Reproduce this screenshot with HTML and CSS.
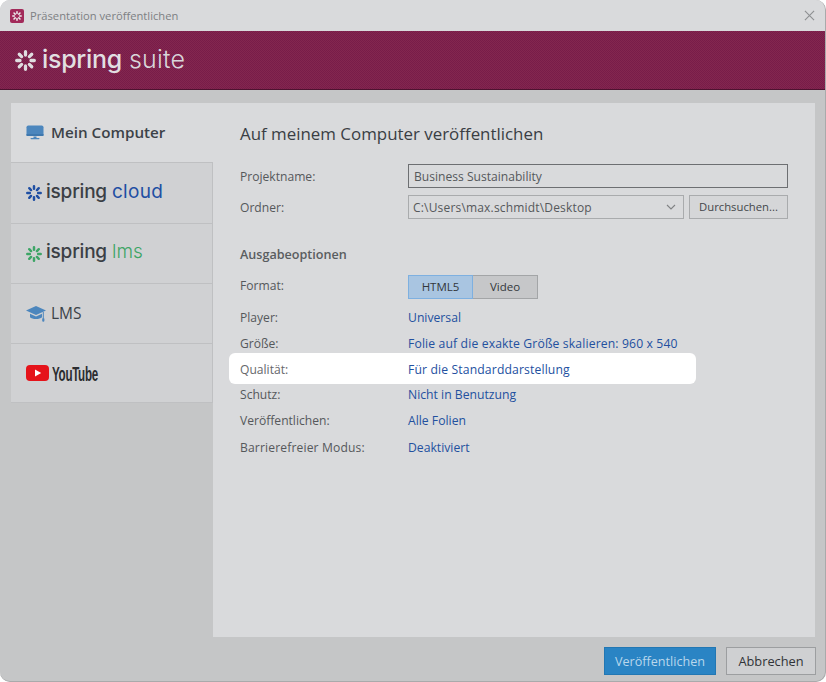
FILE: index.html
```html
<!DOCTYPE html>
<html lang="de">
<head>
<meta charset="utf-8">
<title>Präsentation veröffentlichen</title>
<link rel="stylesheet" href="styles.css">
</head>
<body>
<svg class="defs" width="0" height="0" aria-hidden="true">
  <defs>
    <g id="spark">
      <path d="M10 1.6V4.8M10 15.2V18.4M1.6 10H4.8M15.2 10H18.4M4.06 4.06L6.32 6.32M13.68 13.68L15.94 15.94M4.06 15.94L6.32 13.68M13.68 6.32L15.94 4.06" fill="none" stroke="currentColor" stroke-width="3.1" stroke-linecap="round"/>
    </g>
  </defs>
</svg>
<div class="window">
  <header class="titlebar">
    <span class="app-icon"><svg viewBox="0 0 20 20" class="app-spark"><use href="#spark"/></svg></span>
    <span class="title">Präsentation veröffentlichen</span>
    <svg class="close" viewBox="0 0 12 12"><path d="M1 1L11 11M11 1L1 11" stroke="#8d8f91" stroke-width="1.2" fill="none"/></svg>
  </header>
  <div class="banner">
    <svg class="banner-spark" viewBox="0 0 20 20"><use href="#spark"/></svg>
    <span class="brand">ispring</span><span class="brand-sub">suite</span>
  </div>
  <div class="main">
    <nav class="sidebar">
      <div class="tab tab-active">
        <svg class="tab-icon" viewBox="0 0 18 15"><rect x="0.5" y="0.5" width="17" height="10.5" rx="1.8" fill="#4c86bd"/><rect x="0.5" y="9" width="17" height="2" fill="#3f78ae"/><path d="M7.5 11.5H10.5V13H7.5Z" fill="#4c86bd"/><rect x="4.5" y="13" width="9" height="1.2" rx=".6" fill="#4c86bd"/></svg>
        <span class="tab-label tab-label-strong">Mein Computer</span>
      </div>
      <div class="tab tab-cloud">
        <svg class="logo-spark spark-blue" viewBox="0 0 20 20"><use href="#spark"/></svg>
        <span class="logo-name">ispring</span><span class="logo-sub sub-blue">cloud</span>
      </div>
      <div class="tab">
        <svg class="logo-spark spark-green" viewBox="0 0 20 20"><use href="#spark"/></svg>
        <span class="logo-name">ispring</span><span class="logo-sub sub-green">lms</span>
      </div>
      <div class="tab">
        <svg class="tab-icon tab-icon-cap" viewBox="0 0 20 18"><path d="M10 1L20 5.6L10 10L0 5.6Z" fill="#4c86bd"/><path d="M4 8.8V12.2C6 14.6 14 14.6 16 12.2V8.8L10 11.5Z" fill="#4c86bd"/><path d="M17.3 7V13" stroke="#4c86bd" stroke-width="1"/><rect x="16.2" y="13" width="2.2" height="3.8" rx="1" fill="#4c86bd"/></svg>
        <span class="tab-label tab-label-lms">LMS</span>
      </div>
      <div class="tab tab-yt">
        <svg class="yt-icon" viewBox="0 0 23 16"><rect width="23" height="16" rx="4" fill="#e5131a"/><path d="M9 4.6L15.2 8L9 11.4Z" fill="#fff"/></svg>
        <span class="yt-word">YouTube</span>
      </div>
    </nav>
    <section class="panel">
      <h1 class="heading">Auf meinem Computer veröffentlichen</h1>
      <div class="field-row field-name">
        <span class="label">Projektname:</span>
        <div class="input">Business Sustainability</div>
      </div>
      <div class="field-row field-folder">
        <span class="label">Ordner:</span>
        <div class="select">
          <span>C:\Users\max.schmidt\Desktop</span>
          <svg class="chevron" viewBox="0 0 10 6"><path d="M1 1L5 5L9 1" fill="none" stroke="#808284" stroke-width="1.1"/></svg>
        </div>
        <div class="browse">Durchsuchen...</div>
      </div>
      <h2 class="subheading">Ausgabeoptionen</h2>
      <div class="opt-row opt-format">
        <span class="label">Format:</span>
        <div class="segment">
          <span class="seg seg-on">HTML5</span><span class="seg seg-off">Video</span>
        </div>
      </div>
      <div class="opt-row"><span class="label">Player:</span><a class="link">Universal</a></div>
      <div class="opt-row"><span class="label">Größe:</span><a class="link link-wide">Folie auf die exakte Größe skalieren: 960 x 540</a></div>
      <div class="opt-row opt-hl"><span class="label">Qualität:</span><a class="link link-wide">Für die Standarddarstellung</a></div>
      <div class="opt-row"><span class="label">Schutz:</span><a class="link">Nicht in Benutzung</a></div>
      <div class="opt-row"><span class="label">Veröffentlichen:</span><a class="link">Alle Folien</a></div>
      <div class="opt-row opt-last"><span class="label label-long">Barrierefreier Modus:</span><a class="link">Deaktiviert</a></div>
    </section>
  </div>
  <footer class="footer">
    <div class="btn btn-primary">Veröffentlichen</div>
    <div class="btn btn-cancel">Abbrechen</div>
  </footer>
</div>
</body>
</html>
```

FILE: styles.css
```css
html, body { margin: 0; padding: 0; background: #fff; }
body { width: 826px; height: 682px; overflow: hidden; font-family: "Open Sans", "Noto Sans", sans-serif; font-size: 12px; color: #55585b; }
.defs { position: absolute; }
.window { width: 826px; height: 682px; box-sizing: border-box; background: #c5c6c7; border-radius: 10px; border-right: 1px solid #a9aaab; border-bottom: 1px solid #a9aaab; display: flex; flex-direction: column; overflow: hidden; }

.titlebar { height: 31px; flex: none; box-sizing: border-box; background: #d9dadc; display: flex; align-items: center; padding: 0 10px; }
.app-icon { width: 14px; height: 14px; border-radius: 2px; background: #a22a5a; display: flex; align-items: center; justify-content: center; margin-right: 6px; }
.app-spark { width: 10px; height: 10px; color: #eee; }
.title { color: #7d8083; font-size: 11.2px; flex: 1; }
.close { width: 11px; height: 11px; }

.banner { height: 59px; flex: none; background: repeating-conic-gradient(#781c49 0 25%, #83274f 0 50%) 0 0 / 2px 2px; border-bottom: 1px solid #4e1230; box-sizing: border-box; display: flex; align-items: center; padding-left: 15px; color: #e1dfe1; }
.banner-spark { width: 21px; height: 21px; margin-right: 6px; color: #dfdde0; }
.brand { font-family: Inter, Roboto, sans-serif; font-size: 25px; font-weight: 500; letter-spacing: -0.3px; margin-right: 7px; position: relative; top: -1px; }
.brand-sub { font-family: Inter, Roboto, sans-serif; font-size: 25px; font-weight: 300; color: #d9d6da; letter-spacing: 0.2px; position: relative; top: -1px; }

.main { flex: 1; display: flex; padding: 13px 0 0 11px; min-height: 0; }
.sidebar { width: 202px; flex: none; align-self: flex-start; }
.tab { height: 60px; box-sizing: border-box; background: #d0d1d3; border-top: 1px solid #bfc0c2; border-right: 1px solid #bfc0c2; display: flex; align-items: center; padding-left: 15px; color: #3c4248; }
.tab-active { height: 59px; background: #d9dadc; border-right: none; border-top: none; padding-bottom: 1px; }
.tab-cloud { height: 61px; }
.tab-yt { border-bottom: 1px solid #bfc0c2; }
.tab-icon { width: 18px; height: 15px; margin-right: 7px; }
.tab-icon-cap { width: 20px; height: 18px; margin-right: 5px; }
.tab-label { font-size: 14.5px; color: #3c4248; }
.tab-label-strong { font-size: 15.2px; font-weight: 600; }
.tab-label-lms { font-size: 15.5px; position: relative; top: -1px; }
.logo-spark { width: 16px; height: 16px; margin-right: 4px; }
.spark-blue { color: #1f4fa3; }
.spark-green { color: #3da566; }
.logo-name { font-family: Inter, Roboto, sans-serif; font-size: 19px; font-weight: 500; letter-spacing: -0.2px; color: #3b3f45; margin-right: 5px; position: relative; top: -2px; }
.logo-sub { font-family: Inter, Roboto, sans-serif; font-size: 19px; font-weight: 400; letter-spacing: 0.3px; position: relative; top: -2px; }
.sub-blue { color: #1f4fa3; }
.sub-green { color: #3da566; font-weight: 300; letter-spacing: 0; }
.yt-icon { width: 23px; height: 16px; margin-right: 3px; }
.yt-word { font-family: "Liberation Sans", sans-serif; font-size: 20px; font-weight: 700; color: #2c2d30; transform: scaleX(.58); transform-origin: left center; letter-spacing: -0.5px; position: relative; top: 1px; }

.panel { flex: 1; margin-right: 10px; background: #d9dadc; padding: 0 27px; min-width: 0; }
.heading { margin: 19px 0 0; font-size: 16.9px; font-weight: 400; color: #3a3e44; line-height: 24px; }
.field-row { display: flex; align-items: center; }
.field-name { margin-top: 18px; }
.field-folder { margin-top: 7px; }
.label { width: 168px; flex: none; color: #55585b; font-size: 12.1px; }
.label-long { letter-spacing: .15px; }
.input { width: 380px; height: 24px; box-sizing: border-box; border: 1px solid #6d6f72; line-height: 23px; padding-left: 5px; color: #55585b; font-size: 12.1px; }
.select { width: 276px; height: 24px; box-sizing: border-box; border: 1px solid #a9abad; display: flex; justify-content: space-between; align-items: center; padding: 0 5px 0 4px; color: #55585b; letter-spacing: .18px; }
.chevron { width: 10px; height: 6px; margin-right: 2px; }
.browse { width: 99px; margin-left: 5px; height: 24px; box-sizing: border-box; border: 1px solid #a9abad; background: #d5d6d8; text-align: center; line-height: 21px; font-size: 11.3px; color: #44474b; }
.subheading { margin: 26px 0 0; font-size: 12.6px; font-weight: 600; color: #5a5d60; line-height: 20px; }
.opt-row { display: flex; align-items: center; height: 26px; }
.opt-format { margin-top: 10px; height: 24px; margin-bottom: 5px; align-items: flex-start; }
.opt-format .label { line-height: 22px; }
.link { color: #23509f; font-size: 12.2px; }
.link-wide { letter-spacing: .13px; }
.segment { display: flex; }
.seg { height: 24px; box-sizing: border-box; line-height: 22px; text-align: center; color: #33373b; font-size: 11.5px; }
.seg-on { width: 65px; background: #a9c5e1; border: 1px solid #7eb0e0; }
.seg-off { width: 65px; background: #c6c7c9; border: 1px solid #a3a5a7; border-left: none; }
.opt-hl { background: #fff; border-radius: 6px; height: 31px; box-sizing: border-box; margin: -3px 92px -3px -11px; padding: 1px 0 0 11px; position: relative; }
.opt-hl .label { color: #66686b; }
.opt-last { margin-top: 1px; }

.footer { height: 44px; flex: none; box-sizing: border-box; display: flex; justify-content: flex-end; align-items: flex-start; gap: 10px; padding: 10px 9px 0 0; }
.btn { height: 28px; box-sizing: border-box; text-align: center; line-height: 27px; font-size: 12.6px; }
.btn-primary { width: 112px; background: #2a84c4; border: 1px solid #2277b3; color: #b9d7ec; }
.btn-cancel { width: 90px; background: #cfd0d2; border: 1px solid #9c9ea0; color: #303337; font-size: 12.8px; }
```
